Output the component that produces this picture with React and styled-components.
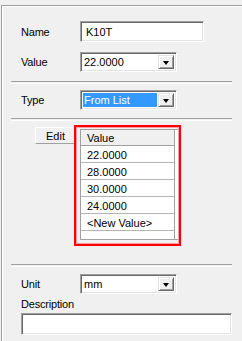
import styled, { createGlobalStyle } from "styled-components";

const GlobalStyle = createGlobalStyle`
  html, body {
    margin: 0;
    padding: 0;
    background: #f0f0f0;
    overflow: hidden;
  }
  body {
    font-family: "Liberation Sans", Arial, sans-serif;
    font-size: 11px;
    color: #000000;
  }
`;

const Frame = styled.div`
  margin: 5px 0 0 1px;
  height: 336px;
  box-sizing: border-box;
  border-top: 1px solid #a0a0a0;
  border-left: 1px solid #a0a0a0;
  box-shadow: inset 1px 1px 0 #ffffff;
  padding-left: 9px;
`;

const Content = styled.div`
  display: flex;
  flex-direction: column;
  width: 221px;
`;

const FieldRow = styled.div`
  display: flex;
  align-items: center;
  padding-left: 10px;
  margin-top: ${(p) => p.top}px;
  height: ${(p) => p.height || 20}px;
`;

const Label = styled.span`
  width: 59px;
  flex: none;
  letter-spacing: -0.2px;
`;

const sunken = `
  box-sizing: border-box;
  border: 1px solid;
  border-color: #a0a0a0 #ffffff #ffffff #a0a0a0;
  box-shadow: inset 1px 1px 0 #696969, inset -1px -1px 0 #e3e3e3;
`;

const TextBox = styled.div`
  ${sunken}
  width: ${(p) => p.width}px;
  height: ${(p) => p.height}px;
  background: #ffffff;
  display: flex;
  align-items: center;
  padding-left: 5px;
  margin-left: ${(p) => p.left || 0}px;
  margin-top: ${(p) => p.top || 0}px;
`;

const Combo = styled.div`
  ${sunken}
  width: 97px;
  height: 20px;
  background: #ffffff;
  display: flex;
  align-items: stretch;
  padding: 2px;
`;

const ComboText = styled.div`
  flex: 1;
  display: flex;
  align-items: center;
  padding-left: 1px;
  margin-right: 1px;
  background: ${(p) => (p.selected ? "#3399ff" : "transparent")};
  color: ${(p) => (p.selected ? "#ffffff" : "#000000")};
`;

const DropButton = styled.div`
  width: 16px;
  flex: none;
  box-sizing: border-box;
  background: #f0f0f0;
  border: 1px solid;
  border-color: #e3e3e3 #696969 #696969 #e3e3e3;
  box-shadow: inset 1px 1px 0 #ffffff, inset -1px -1px 0 #a0a0a0;
  display: flex;
  align-items: center;
  justify-content: center;
`;

const Arrow = styled.div`
  width: 0;
  height: 0;
  margin-top: 1px;
  border-left: 3.5px solid transparent;
  border-right: 3.5px solid transparent;
  border-top: 4px solid #000000;
`;

const Separator = styled.div`
  margin-top: ${(p) => p.top}px;
  height: 1px;
  border-top: 1px solid #a0a0a0;
  border-bottom: 1px solid #ffffff;
`;

const EditArea = styled.div`
  display: flex;
  align-items: flex-start;
  margin-top: 4px;
  padding-left: 24px;
`;

const EditButton = styled.div`
  margin-top: 2px;
  width: 41px;
  height: 17px;
  box-sizing: border-box;
  border: 1px solid;
  border-color: #ffffff #a0a0a0 #a0a0a0 #ffffff;
  display: flex;
  align-items: center;
  justify-content: center;
`;

const RedBox = styled.div`
  position: relative;
  margin-left: -2px;
  width: 107px;
  height: 121px;
  box-sizing: border-box;
  border: 2px solid #ff0000;
  box-shadow: inset 0 0 0 1px rgba(255, 60, 60, 0.45);
  padding: 2px 1px 0 4px;
`;

const Grid = styled.div`
  width: 98px;
  height: 111px;
  box-sizing: border-box;
  background: #ffffff;
  border-left: 1px solid #a0a0a0;
  border-top: 1px solid #a0a0a0;
  border-bottom: 1px solid #a0a0a0;
  overflow: hidden;
`;

const Cell = styled.div`
  width: 94px;
  height: ${(p) => (p.header ? 16 : 17)}px;
  box-sizing: border-box;
  border-right: 1px solid #a0a0a0;
  border-bottom: 1px solid ${(p) => (p.header ? "#a0a0a0" : "#b4b4b4")};
  background: ${(p) => (p.header ? "#f0f0f0" : "#ffffff")};
  display: flex;
  align-items: center;
  padding-left: 6px;
  padding-top: ${(p) => (p.header ? 0 : 1)}px;
`;

const DescLabel = styled.div`
  margin-top: 4px;
  padding-left: 10px;
  height: 13px;
  line-height: 13px;
  letter-spacing: -0.2px;
`;

function ComboBox({ value, selected }) {
  return (
    <Combo>
      <ComboText selected={selected}>{value}</ComboText>
      <DropButton>
        <Arrow />
      </DropButton>
    </Combo>
  );
}

const values = ["22.0000", "28.0000", "30.0000", "24.0000", "<New Value>"];

export default function App() {
  return (
    <>
      <GlobalStyle />
      <Frame>
        <Content>
          <FieldRow top={15} height={21}>
            <Label>Name</Label>
            <TextBox width={124} height={21}>K10T</TextBox>
          </FieldRow>
          <FieldRow top={10}>
            <Label>Value</Label>
            <ComboBox value="22.0000" />
          </FieldRow>

          <Separator top={9} />

          <FieldRow top={6}>
            <Label>Type</Label>
            <ComboBox value="From List" selected />
          </FieldRow>

          <Separator top={8} />

          <EditArea>
            <EditButton>Edit</EditButton>
            <RedBox>
              <Grid>
                <Cell header>Value</Cell>
                {values.map((v) => (
                  <Cell key={v}>{v}</Cell>
                ))}
                <Cell />
              </Grid>
            </RedBox>
          </EditArea>

          <Separator top={18} />

          <FieldRow top={7}>
            <Label>Unit</Label>
            <ComboBox value="mm" />
          </FieldRow>
          <DescLabel>Description</DescLabel>
          <TextBox width={211} height={22} left={10} top={2} />

          <Separator top={7} />
        </Content>
      </Frame>
    </>
  );
}
